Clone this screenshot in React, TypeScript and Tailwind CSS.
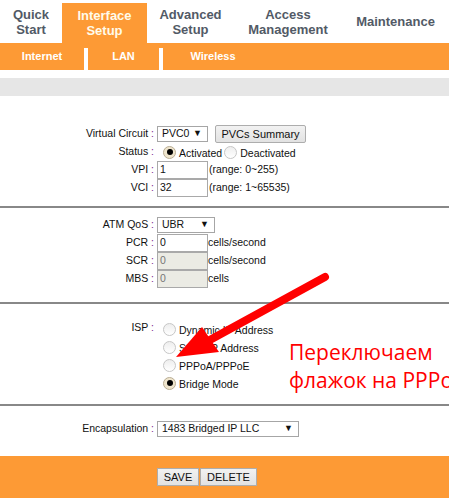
import type { ReactNode } from "react";

const Colon = () => <span className="text-[#7b2d8e]">:</span>;

const Row = ({ label, children }: { label?: string; children?: ReactNode }) => (
  <div className="flex h-[18px] items-center">
    <div className="w-[157px] shrink-0 pr-[3px] text-right text-[#111]">
      {label && (
        <>
          {label} <Colon />
        </>
      )}
    </div>
    <div className="flex items-center">{children}</div>
  </div>
);

const Radio = ({ checked, className = "" }: { checked?: boolean; className?: string }) =>
  checked ? (
    <span
      className={`flex h-[13px] w-[13px] shrink-0 items-center justify-center rounded-full border border-[#b9ad94] bg-[#efe5cd] ${className}`}
    >
      <span className="block h-[6px] w-[6px] rounded-full bg-black" />
    </span>
  ) : (
    <span
      className={`block h-[13px] w-[13px] shrink-0 rounded-full border border-[#c6c6c6] bg-gradient-to-b from-[#eeeeee] to-white ${className}`}
    />
  );

const Select = ({ value, w }: { value: string; w: string }) => (
  <div className={`flex h-[16px] items-center justify-between border border-[#a6a6a6] bg-white pl-[4px] pr-[5px] ${w}`}>
    <span>{value}</span>
    <span className="text-[9px]">▼</span>
  </div>
);

const Input = ({ value, disabled }: { value: string; disabled?: boolean }) => (
  <div
    className={`flex h-[18px] w-[51px] items-center border border-[#a9a9a9] pl-[2px] ${
      disabled ? "bg-[#ebebe4] text-[#777]" : "bg-white"
    }`}
  >
    {value}
  </div>
);

const Divider = () => <div className="h-[2px] bg-[#888]" />;

const App = () => {
  return (
    <div className="relative h-[498px] w-[449px] overflow-hidden bg-white font-['Liberation_Sans',Arial,sans-serif] text-[10.5px] text-[#111]">
      {/* main tabs */}
      <div className="flex h-[43px] items-end text-[13px] font-bold leading-[15px] text-[#525a66]">
        <div className="flex h-[43px] w-[62px] items-center justify-center text-center">
          Quick
          <br />
          Start
        </div>
        <div className="flex h-[40px] w-[85px] items-center justify-center bg-[#fd9a35] text-center text-[#fffbea]">
          Interface
          <br />
          Setup
        </div>
        <div className="flex h-[43px] w-[87px] items-center justify-center text-center">
          Advanced
          <br />
          Setup
        </div>
        <div className="flex h-[43px] w-[108px] items-center justify-center text-center">
          Access
          <br />
          Management
        </div>
        <div className="flex h-[43px] flex-1 items-center justify-center text-center">Maintenance</div>
      </div>

      {/* sub tabs */}
      <div className="flex h-[27px] bg-[#fd9a35] text-[11px] font-bold text-white">
        <div className="flex w-[84px] items-center justify-center">Internet</div>
        <div className="mt-[5px] w-[4px] bg-white" />
        <div className="flex w-[71px] items-center justify-center">LAN</div>
        <div className="mt-[5px] w-[4px] bg-white" />
        <div className="flex w-[100px] items-center justify-center">Wireless</div>
      </div>

      <div className="mt-[8px] h-[18px] bg-[#e6e6e6]" />

      {/* virtual circuit */}
      <div className="h-[110px] pt-[29px]">
        <Row label="Virtual Circuit">
          <Select value="PVC0" w="w-[51px]" />
          <button className="ml-[7px] h-[18px] w-[91px] rounded-[2px] border border-[#adadad] bg-gradient-to-b from-[#f2f2f2] to-[#e2e2e2] text-[11px]">
            PVCs Summary
          </button>
        </Row>
        <Row label="Status">
          <Radio checked className="ml-[6px]" />
          <span className="ml-[3px] mt-[3px]">Activated</span>
          <Radio className="ml-[2px]" />
          <span className="ml-[3px] mt-[3px]">Deactivated</span>
        </Row>
        <Row label="VPI">
          <Input value="1" />
          <span className="ml-[1px]">(range: 0~255)</span>
        </Row>
        <Row label="VCI">
          <Input value="32" />
          <span className="ml-[1px]">(range: 1~65535)</span>
        </Row>
      </div>
      <Divider />

      {/* ATM QoS */}
      <div className="h-[94px] pt-[8px]">
        <Row label="ATM QoS">
          <Select value="UBR" w="w-[58px]" />
        </Row>
        <Row label="PCR">
          <Input value="0" />
          <span>cells/second</span>
        </Row>
        <Row label="SCR">
          <Input value="0" disabled />
          <span>cells/second</span>
        </Row>
        <Row label="MBS">
          <Input value="0" disabled />
          <span>cells</span>
        </Row>
      </div>
      <Divider />

      {/* ISP */}
      <div className="h-[100px] pt-[16px]">
        {[
          ["ISP", "Dynamic IP Address", false],
          ["", "Static IP Address", false],
          ["", "PPPoA/PPPoE", false],
          ["", "Bridge Mode", true],
        ].map(([label, text, on]) => (
          <div key={text as string} className="flex h-[18px] items-center">
            <div className="w-[157px] shrink-0 self-start pr-[3px] text-right">
              {label && (
                <>
                  {label} <Colon />
                </>
              )}
            </div>
            <Radio checked={on as boolean} className="ml-[6px]" />
            <span className="ml-[3px] mt-[3px]">{text}</span>
          </div>
        ))}
      </div>
      <Divider />

      {/* encapsulation */}
      <div className="h-[50px] pt-[14px]">
        <Row label="Encapsulation">
          <Select value="1483 Bridged IP LLC" w="w-[142px]" />
        </Row>
      </div>

      {/* footer */}
      <div className="flex h-[42px] bg-[#fd9a35] pl-[157px] pt-[12px]">
        <button className="h-[18px] w-[42px] border border-[#adadad] bg-gradient-to-b from-[#f2f2f2] to-[#e2e2e2] text-[11px]">
          SAVE
        </button>
        <button className="ml-[1px] h-[18px] w-[57px] border border-[#adadad] bg-gradient-to-b from-[#f2f2f2] to-[#e2e2e2] text-[11px]">
          DELETE
        </button>
      </div>

      {/* annotation */}
      <svg className="pointer-events-none absolute left-0 top-0" width="449" height="498" viewBox="0 0 449 498">
        <line x1="325" y1="277" x2="208" y2="341" stroke="#ff0000" strokeWidth="8" strokeLinecap="round" />
        <polygon points="176,357 202,327 219,352" fill="#ff0000" />
      </svg>
      <div className="absolute left-[289px] top-[338px] whitespace-nowrap font-['Open_Sans',sans-serif] text-[21px] leading-[28px] text-[#ff0000]">
        Переключаем
        <br />
        флажок на PPPoE
      </div>
    </div>
  );
};

export default App;
